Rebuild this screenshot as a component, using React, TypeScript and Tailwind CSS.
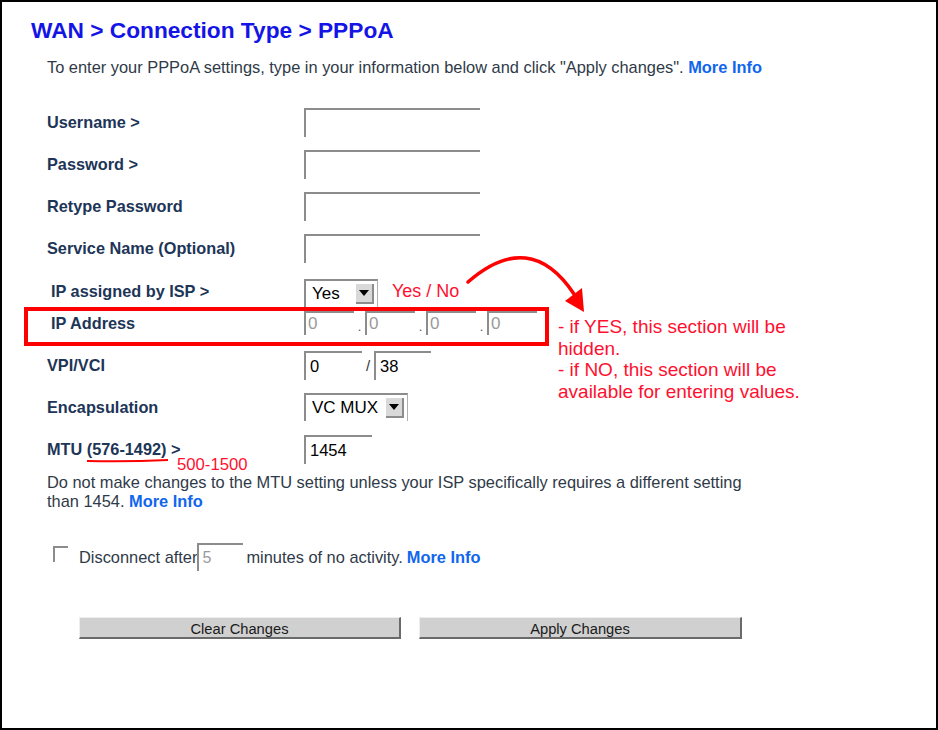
import React from "react";

const LABEL = "font-bold text-[16.3px] text-[#1d3557]";
const INPUT_BASE = "border-t-2 border-l-2 border-[#8c8c8c] bg-white";

function TextBox({ w, value, disabled }: { w: string; value?: string; disabled?: boolean }) {
  return (
    <div
      className={`${INPUT_BASE} ${w} h-[29px] flex items-center pl-[4px] text-[16.5px] ${
        disabled ? "bg-[#efefef] text-[#9a9a9a]" : "text-black"
      }`}
    >
      {value}
    </div>
  );
}

function SelectBox({ w, value }: { w: string; value: string }) {
  return (
    <div className={`${INPUT_BASE} ${w} h-[28px] flex items-center justify-between pl-[6px] pr-[3px] border-r border-r-[#b0b0b0]`}>
      <span className="text-[17px] text-black">{value}</span>
      <span className="w-[18px] h-[20px] bg-[#d9d9d9] border-r-2 border-b-2 border-[#8c8c8c] flex items-center justify-center">
        <span className="w-0 h-0 border-l-[5px] border-r-[5px] border-t-[6px] border-l-transparent border-r-transparent border-t-black" />
      </span>
    </div>
  );
}

function Row({ label, children, className = "", labelClass = "" }: { label: React.ReactNode; children?: React.ReactNode; className?: string; labelClass?: string }) {
  return (
    <div className={`flex items-center h-[30px] ${className}`}>
      <div className={`w-[257px] ${LABEL} ${labelClass}`}>{label}</div>
      <div className="flex items-center">{children}</div>
    </div>
  );
}

export default function App() {
  return (
    <div
      className="relative w-[938px] h-[730px] border-2 border-black bg-white overflow-hidden"
      style={{ fontFamily: '"Liberation Sans", Arial, sans-serif' }}
    >
      <div className="pt-[15px] pl-[45px]">
        {/* Title */}
        <h1 className="-ml-[16px] text-[22.7px] leading-[26px] font-bold text-[#1414e6]">
          WAN &gt; Connection Type &gt; PPPoA
        </h1>
        <p className="mt-[14px] text-[16.4px] leading-[20px] text-[#2f3a48]">
          To enter your PPPoA settings, type in your information below and click "Apply changes".{" "}
          <span className="font-bold text-[#1166ee]">More Info</span>
        </p>

        {/* Form */}
        <div className="mt-[30px] flex flex-col gap-[12px]">
          <Row label="Username >">
            <TextBox w="w-[176px]" />
          </Row>
          <Row label="Password >">
            <TextBox w="w-[176px]" />
          </Row>
          <Row label="Retype Password">
            <TextBox w="w-[176px]" />
          </Row>
          <Row label="Service Name (Optional)">
            <TextBox w="w-[176px]" />
          </Row>
          <Row label="IP assigned by ISP >" className="mt-[1px]" labelClass="pl-[4px] text-[15px]">
            <div className="mt-[4px]">
              <SelectBox w="w-[74px]" value="Yes" />
            </div>
          </Row>
          <Row label="IP Address" className="-mt-[10px]" labelClass="pl-[4px] text-[15px]">
            {[0, 1, 2, 3].map((i) => (
              <div key={i} className="flex items-center">
                {i > 0 && <span className="w-[11px] text-center text-[13px] text-[#555] mt-[8px]">.</span>}
                <div className={`${INPUT_BASE} w-[50px] h-[24px] bg-[#efefef] text-[#9a9a9a] text-[17px] flex items-center pl-[2px]`}>0</div>
              </div>
            ))}
          </Row>
          <Row label="VPI/VCI">
            <TextBox w="w-[58px]" value="0" />
            <span className="w-[12px] text-center text-[15px] text-[#333] mt-[2px]">/</span>
            <TextBox w="w-[57px]" value="38" />
          </Row>
          <Row label="Encapsulation">
            <SelectBox w="w-[104px]" value="VC MUX" />
          </Row>
          <Row label={<span>MTU (576-1492) &gt;</span>}>
            <TextBox w="w-[68px]" value="1454" />
          </Row>
        </div>

        <p className="mt-[9px] w-[720px] text-[16.4px] leading-[19px] text-[#2f3a48]">
          Do not make changes to the MTU setting unless your ISP specifically requires a different setting than 1454.{" "}
          <span className="font-bold text-[#1166ee]">More Info</span>
        </p>

        {/* Idle disconnect */}
        <div className="mt-[32px] flex items-center h-[28px] text-[16.4px] text-[#2f3a48]">
          <span className="ml-[6px] w-[15px] h-[16px] border-t-2 border-l-2 border-[#8c8c8c] -mt-[6px]" />
          <span className="ml-[11px]">Disconnect after</span>
          <div className={`${INPUT_BASE} w-[46px] h-[28px] bg-[#efefef] text-[#9a9a9a] text-[16px] flex items-center pl-[3px]`}>5</div>
          <span className="ml-[3px]">minutes of no activity.</span>
          <span className="ml-[4px] font-bold text-[#1166ee]">More Info</span>
        </div>

        {/* Buttons */}
        <div className="mt-[46px] ml-[32px] flex gap-[18px]">
          <button className="w-[322px] h-[22px] bg-[#d0d0d0] border-t border-l border-[#eeeeee] border-r-2 border-b-2 border-r-[#6a6a6a] border-b-[#6a6a6a] text-[14.7px] text-[#1a1a1a]">
            Clear Changes
          </button>
          <button className="w-[323px] h-[22px] bg-[#d0d0d0] border-t border-l border-[#eeeeee] border-r-2 border-b-2 border-r-[#6a6a6a] border-b-[#6a6a6a] text-[14.7px] text-[#1a1a1a]">
            Apply Changes
          </button>
        </div>
      </div>

      {/* Annotations */}
      <div className="absolute left-[22px] top-[305px] w-[525px] h-[39px] border-4 border-[#ff0000] pointer-events-none" />
      <span className="absolute left-[390px] top-[278px] text-[18px] leading-[22px] text-[#ff1030]">Yes / No</span>
      <span className="absolute left-[175px] top-[455px] text-[16.7px] leading-[16px] text-[#ff1030]">500-1500</span>
      <div className="absolute left-[556px] top-[314px] text-[19px] leading-[21.7px] text-[#ff1030]">
        <div>- if YES, this section will be</div>
        <div>hidden.</div>
        <div>- if NO, this section will be</div>
        <div>available for entering values.</div>
      </div>
      <svg className="absolute left-[-2px] top-[-2px] pointer-events-none" width="938" height="730" viewBox="0 0 938 730">
        <path d="M468 282 Q530 228 574 294" fill="none" stroke="#ff0000" strokeWidth="3.5" strokeLinecap="round" />
        <polygon points="584,312 565,301 582,288" fill="#ff0000" />
        <path d="M87 461 Q128 462 168 460" fill="none" stroke="#ff0000" strokeWidth="2" />
      </svg>
    </div>
  );
}
